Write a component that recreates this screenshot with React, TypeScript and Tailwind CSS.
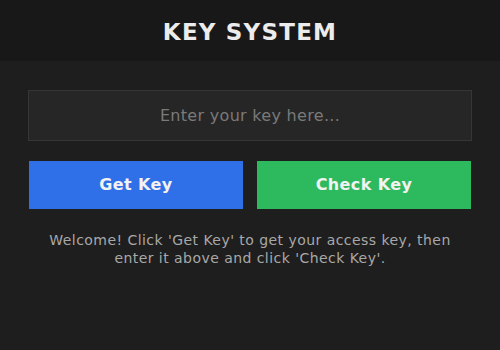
export default function App() {
  return (
    <div className="flex h-[350px] w-[500px] flex-col bg-[#1e1e1e] font-['DejaVu_Sans',sans-serif]">
      <div className="flex h-[61px] items-center justify-center bg-[#181818] pt-[3px]">
        <h1 className="text-[23px] font-bold tracking-[1.2px] text-[#ececec]">
          KEY SYSTEM
        </h1>
      </div>

      <div className="flex flex-col px-[28px] pt-[29px]">
        <input
          type="text"
          placeholder="Enter your key here..."
          className="h-[51px] w-full border border-[#363636] bg-[#262626] text-center text-[16px] tracking-[0.3px] text-[#ddd] outline-none placeholder:text-[#7a7a7a]"
        />

        <div className="mt-[20px] grid grid-cols-2 gap-[14px] px-px">
          <button
            type="button"
            className="h-[48px] bg-[#2f6fe8] text-[16px] font-bold tracking-[0.4px] text-[#f2f2f2]"
          >
            Get Key
          </button>
          <button
            type="button"
            className="h-[48px] bg-[#2dba5e] text-[16px] font-bold tracking-[0.4px] text-[#f2f2f2]"
          >
            Check Key
          </button>
        </div>

        <p className="mx-auto mt-[22px] w-[420px] text-center text-[14px] leading-[18px] tracking-[0.45px] text-[#a8a8a8]">
          Welcome! Click 'Get Key' to get your access key, then enter it above
          and click 'Check Key'.
        </p>
      </div>
    </div>
  )
}
